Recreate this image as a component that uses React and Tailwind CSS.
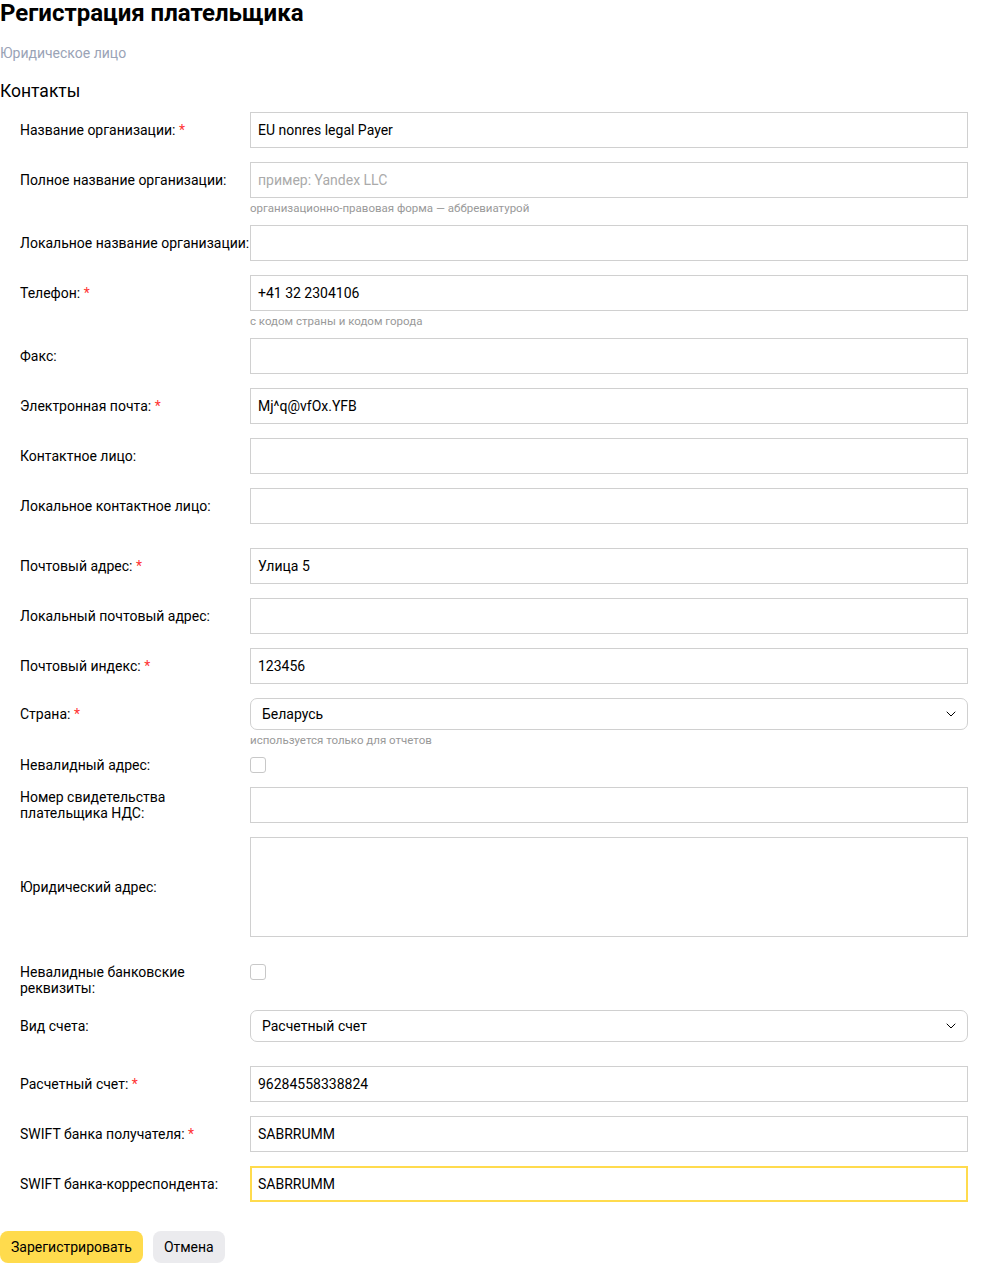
import { ChevronDown } from "lucide-react";

function Label({ children, required }) {
  return (
    <div className="w-[230px] shrink-0 text-[14px] leading-[16px] text-[#000]">
      {children}
      {required && <span className="text-[#ff3333]"> *</span>}
    </div>
  );
}

function Hint({ children }) {
  return <div className="mt-[3px] h-[14px] text-[11.5px] leading-[14px] text-[#999]">{children}</div>;
}

function Field({ label, required, value, placeholder, hint, mb = "mb-[14px]", focused }) {
  return (
    <div className={`flex ${mb}`}>
      <div className="flex h-[36px] items-center">
        <Label required={required}>{label}</Label>
      </div>
      <div className="flex-1">
        <div
          className={
            focused
              ? "flex h-[36px] items-center border-2 border-[#ffdb4d] px-[6px] text-[14px] text-black"
              : "flex h-[36px] items-center border border-[#d0d0d0] px-[7px] text-[14px] text-black"
          }
        >
          {value ? <span>{value}</span> : <span className="text-[#aaa]">{placeholder}</span>}
        </div>
        {hint && <Hint>{hint}</Hint>}
      </div>
    </div>
  );
}

function Select({ label, required, value, hint, mb }) {
  return (
    <div className={`flex ${mb}`}>
      <div className="flex h-[32px] items-center">
        <Label required={required}>{label}</Label>
      </div>
      <div className="flex-1">
        <div className="flex h-[32px] items-center justify-between rounded-[7px] border border-[#d0d0d0] pl-[11px] pr-[8px] text-[14px] text-black">
          <span>{value}</span>
          <ChevronDown size={16} strokeWidth={1.5} />
        </div>
        {hint && <Hint>{hint}</Hint>}
      </div>
    </div>
  );
}

function Check({ label, mb }) {
  return (
    <div className={`flex items-start ${mb}`}>
      <Label>{label}</Label>
      <div className="h-[16px] w-[16px] rounded-[3px] border border-[#c8c8c8] bg-white" />
    </div>
  );
}

export default function App() {
  return (
    <div className="min-h-screen w-full bg-white pr-[32px] font-['Roboto',sans-serif] text-black">
      <h1 className="text-[24px] font-bold leading-[26px]">Регистрация плательщика</h1>
      <div className="mt-[19px] text-[14px] leading-[16px] text-[#9aa3b6]">Юридическое лицо</div>
      <h2 className="mt-[19px] text-[17.5px] leading-[22px]">Контакты</h2>

      <div className="mt-[10px] pl-[20px]">
        <Field label="Название организации:" required value="EU nonres legal Payer" />
        <Field
          label="Полное название организации:"
          placeholder="пример: Yandex LLC"
          hint="организационно-правовая форма — аббревиатурой"
          mb="mb-[10px]"
        />
        <Field label="Локальное название организации:" />
        <Field label="Телефон:" required value="+41 32 2304106" hint="с кодом страны и кодом города" mb="mb-[10px]" />
        <Field label="Факс:" />
        <Field label="Электронная почта:" required value="Mj^q@vfOx.YFB" />
        <Field label="Контактное лицо:" />
        <Field label="Локальное контактное лицо:" mb="mb-[24px]" />
        <Field label="Почтовый адрес:" required value="Улица 5" />
        <Field label="Локальный почтовый адрес:" />
        <Field label="Почтовый индекс:" required value="123456" />
        <Select label="Страна:" required value="Беларусь" hint="используется только для отчетов" mb="mb-[10px]" />
        <Check label="Невалидный адрес:" mb="mb-[14px]" />
        <Field
          label={
            <>
              Номер свидетельства
              <br />
              плательщика НДС:
            </>
          }
        />
        <div className="mb-[27px] flex items-center">
          <Label>Юридический адрес:</Label>
          <div className="h-[100px] flex-1 border border-[#d0d0d0]" />
        </div>
        <Check
          label={
            <>
              Невалидные банковские
              <br />
              реквизиты:
            </>
          }
          mb="mb-[14px]"
        />
        <Select label="Вид счета:" value="Расчетный счет" mb="mb-[24px]" />
        <Field label="Расчетный счет:" required value="96284558338824" />
        <Field label="SWIFT банка получателя:" required value="SABRRUMM" />
        <Field label="SWIFT банка-корреспондента:" value="SABRRUMM" focused mb="mb-[29px]" />
      </div>

      <div className="flex gap-[10px]">
        <button className="h-[32px] rounded-[8px] bg-[#ffdb4d] px-[11px] text-[14px] text-black">
          Зарегистрировать
        </button>
        <button className="h-[32px] rounded-[8px] bg-[#ebebee] px-[11px] text-[14px] text-black">Отмена</button>
      </div>
    </div>
  );
}
